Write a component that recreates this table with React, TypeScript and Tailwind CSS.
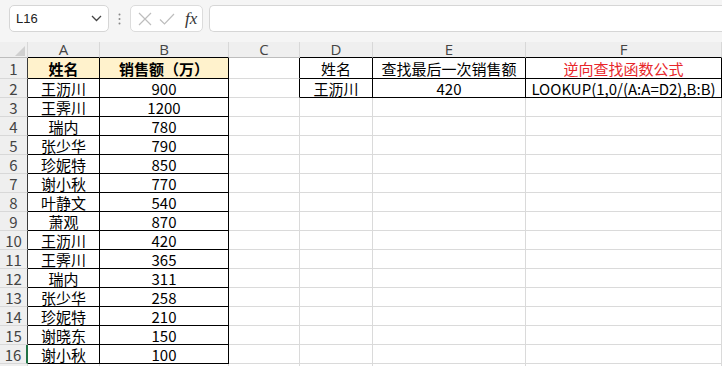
import React from "react";

const FONT = '"Noto Sans CJK SC", "Noto Sans", sans-serif';

const letters = ["A", "B", "C", "D", "E", "F"];

const names = ["王沥川", "王霁川", "瑞内", "张少华", "珍妮特", "谢小秋", "叶静文", "萧观", "王沥川", "王霁川", "瑞内", "张少华", "珍妮特", "谢晓东", "谢小秋"];
const sales = ["900", "1200", "780", "790", "850", "770", "540", "870", "420", "365", "311", "258", "210", "150", "100"];

function Cell({
  children,
  cls = "",
}: {
  children?: React.ReactNode;
  cls?: string;
}) {
  return (
    <div className={`flex items-center justify-center overflow-hidden whitespace-nowrap leading-none border-r border-b ${cls}`}>
      {children}
    </div>
  );
}

export default function App() {
  const rows: React.ReactNode[] = [];
  for (let r = 1; r <= 17; r++) {
    const h = r === 1 ? "h-[21px]" : "h-[19px]";
    const inA = r <= 16;
    const inD = r <= 2;
    rows.push(
      <Cell
        key={`rh${r}`}
        cls={`${h} bg-[#efefef] text-[#444] text-[15px] border-b-[#d8d8d8] ${
          r === 16 ? "border-r-2 border-r-[#217346] bg-[#e3e3e3]" : inA ? "border-r-[#3a3a3a]" : "border-r-[#d8d8d8]"
        }`}
      >
        {r <= 16 ? r : ""}
      </Cell>
    );
    rows.push(
      <Cell
        key={`a${r}`}
        cls={`${h} text-[15px] text-black ${r === 1 ? "bg-[#fff2cc] font-bold" : ""} ${
          inA ? "border-r-black border-b-black" : "border-r-[#dadada] border-b-[#dadada]"
        }`}
      >
        {r === 1 ? "姓名" : inA ? names[r - 2] : ""}
      </Cell>
    );
    rows.push(
      <Cell
        key={`b${r}`}
        cls={`${h} text-[15px] text-black ${r === 1 ? "bg-[#fff2cc] font-bold" : ""} ${
          inA ? "border-r-black border-b-black" : "border-r-[#dadada] border-b-[#dadada]"
        }`}
      >
        {r === 1 ? "销售额（万）" : inA ? sales[r - 2] : ""}
      </Cell>
    );
    rows.push(
      <Cell key={`c${r}`} cls={`${h} border-b-[#dadada] ${inD ? "border-r-black" : "border-r-[#dadada]"}`} />
    );
    rows.push(
      <Cell
        key={`d${r}`}
        cls={`${h} text-[15px] text-black ${inD ? "border-r-black border-b-black" : "border-r-[#dadada] border-b-[#dadada]"}`}
      >
        {r === 1 ? "姓名" : r === 2 ? "王沥川" : ""}
      </Cell>
    );
    rows.push(
      <Cell
        key={`e${r}`}
        cls={`${h} text-[15px] text-black ${inD ? "border-r-black border-b-black" : "border-r-[#dadada] border-b-[#dadada]"}`}
      >
        {r === 1 ? "查找最后一次销售额" : r === 2 ? "420" : ""}
      </Cell>
    );
    rows.push(
      <Cell
        key={`f${r}`}
        cls={`${h} text-[15px] ${r === 1 ? "text-[#e8262a]" : "text-black"} ${inD ? "border-r-black border-b-black" : "border-r-[#dadada] border-b-[#dadada]"}`}
      >
        {r === 1 ? "逆向查找函数公式" : r === 2 ? "LOOKUP(1,0/(A:A=D2),B:B)" : ""}
      </Cell>
    );
  }

  return (
    <div className="w-[722px] h-[366px] overflow-hidden bg-white" style={{ fontFamily: FONT }}>
      <div className="h-[42px] bg-[#f5f5f5] flex items-start pt-[5px] pl-[9px] gap-0">
        <div className="w-[100px] h-[27px] bg-white border border-[#d6d6d6] rounded-[5px] flex items-center justify-between pl-[6px] pr-[6px]">
          <span className="text-[13px] text-[#222] leading-none" style={{ fontFamily: '"Liberation Sans", sans-serif' }}>L16</span>
          <svg width="11" height="7" viewBox="0 0 11 7">
            <path d="M1 1 L5.5 5.5 L10 1" fill="none" stroke="#444" strokeWidth="1.3" />
          </svg>
        </div>
        <div className="w-[21px] h-[27px] flex items-center justify-center">
          <svg width="3" height="12" viewBox="0 0 3 12">
            <circle cx="1.5" cy="1.5" r="1" fill="#888" />
            <circle cx="1.5" cy="6" r="1" fill="#888" />
            <circle cx="1.5" cy="10.5" r="1" fill="#888" />
          </svg>
        </div>
        <div className="w-[73px] h-[27px] bg-white border border-[#dcdcdc] rounded-[5px] flex items-center pl-[7px]">
          <svg width="14" height="14" viewBox="0 0 14 14">
            <path d="M1 1 L13 13 M13 1 L1 13" stroke="#bdbdbd" strokeWidth="1.2" fill="none" />
          </svg>
          <svg width="16" height="14" viewBox="0 0 16 14" className="ml-[7px]">
            <path d="M1 7.5 L5.5 12 L15 2" stroke="#bdbdbd" strokeWidth="1.2" fill="none" />
          </svg>
          <span
            className="ml-[10px] text-[17px] italic text-[#333] leading-none"
            style={{ fontFamily: '"Liberation Serif", "DejaVu Serif", serif' }}
          >
            fx
          </span>
        </div>
        <div className="ml-[6px] flex-1 h-[27px] bg-white border border-[#d6d6d6] rounded-l-[5px] border-r-0" />
      </div>
      <div className="grid grid-cols-[28px_72px_129px_71px_73px_153px_196px]">
        <div className="h-[16px] bg-[#efefef] border-r border-b border-r-[#d8d8d8] border-b-[#bdbdbd] relative">
          <svg width="10" height="10" viewBox="0 0 10 10" className="absolute right-[2px] bottom-[1px]">
            <path d="M10 0 L10 10 L0 10 Z" fill="#d0d0d0" />
          </svg>
        </div>
        {letters.map((l, i) => (
          <div
            key={l}
            className={`h-[16px] bg-[#efefef] flex items-end justify-center text-[15px] leading-none text-[#444] border-r border-b border-r-[#d8d8d8] ${
              i === 2 ? "border-b-[#bdbdbd]" : "border-b-black"
            }`}
            style={{ fontFamily: '"Open Sans", "Noto Sans", sans-serif' }}
          >
            <span>{l}</span>
          </div>
        ))}
        {rows}
      </div>
    </div>
  );
}
